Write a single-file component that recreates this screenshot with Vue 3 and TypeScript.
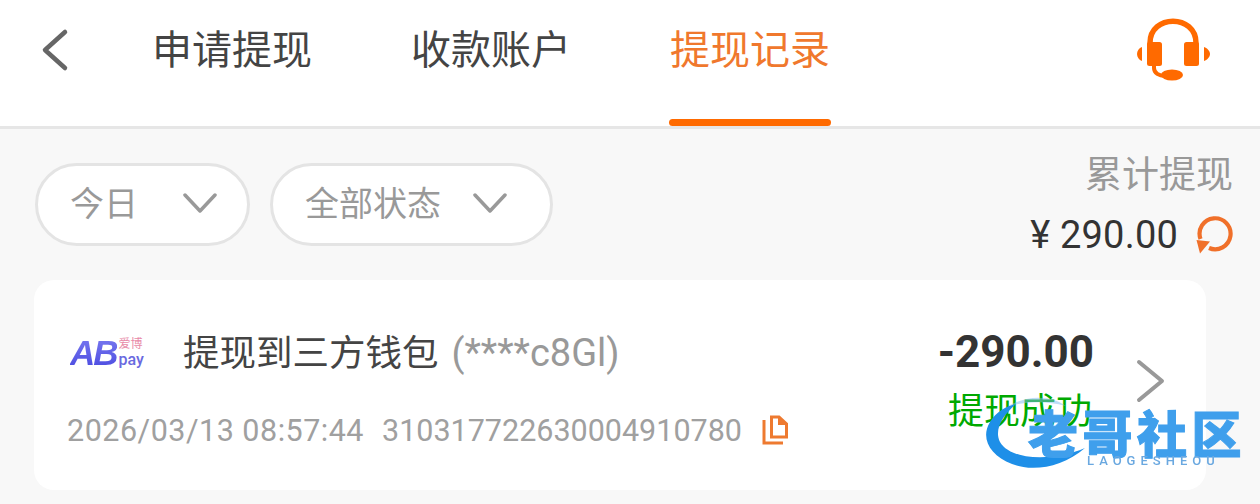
<script setup lang="ts">
const tabs: string[] = ['申请提现', '收款账户', '提现记录']
const activeTab = 2
const filters = [
  { label: '今日', cls: 'pill-range' },
  { label: '全部状态', cls: 'pill-status' },
]
</script>

<template>
  <div class="page">
    <header class="header">
      <svg class="back" viewBox="0 0 30 44" width="30" height="44">
        <path d="M25 4 L5 22 L25 40" fill="none" stroke="#666" stroke-width="4.5" stroke-linecap="round" stroke-linejoin="round" />
      </svg>
      <nav class="tabs">
        <div v-for="(tab, i) in tabs" :key="tab" class="tab" :class="{ active: i === activeTab }">{{ tab }}</div>
      </nav>
      <svg class="support" viewBox="0 0 76 64" width="76" height="64">
        <path d="M15 30 V25 C15 -4 61 -4 61 25 V30" fill="none" stroke="#ff6a00" stroke-width="5.5" />
        <rect x="12" y="24" width="15" height="24" rx="2.5" fill="#ff6a00" />
        <rect x="49" y="24" width="15" height="24" rx="2.5" fill="#ff6a00" />
        <path d="M7 29 C4 30 2 33 2 36 C2 39 4 42 7 43 Z" fill="#ff6a00" />
        <path d="M69 29 C72 30 75 33 75 36 C75 39 72 42 69 43 Z" fill="#ff6a00" />
        <path d="M19 48 V50 C19 55 24 58 30 58" fill="none" stroke="#ff6a00" stroke-width="4" />
        <ellipse cx="37" cy="57" rx="11" ry="5.5" fill="#ff6a00" />
      </svg>
    </header>

    <section class="toolbar">
      <div class="filters">
        <div v-for="f in filters" :key="f.label" class="pill" :class="f.cls">
          <span>{{ f.label }}</span>
          <svg viewBox="0 0 34 20" width="34" height="20">
            <path d="M2 2 L17 18 L32 2" fill="none" stroke="#999" stroke-width="3.5" stroke-linecap="round" stroke-linejoin="round" />
          </svg>
        </div>
      </div>
      <div class="total">
        <div class="total-label">累计提现</div>
        <div class="total-value">
          <span>¥ 290.00</span>
          <svg viewBox="0 0 38 38" width="38" height="38">
            <path d="M4.5 23 A15.5 15.5 0 1 1 13 32" fill="none" stroke="#f0702a" stroke-width="4.2" />
            <path d="M0.5 24 L14 25.5 L4 37.5 Z" fill="#f0702a" />
          </svg>
        </div>
      </div>
    </section>

    <article class="card">
      <div class="card-main">
        <div class="card-head">
          <div class="logo">
            <span class="logo-ab">AB</span>
            <div class="logo-side">
              <span class="logo-cn">爱博</span>
              <span class="logo-pay">pay</span>
            </div>
          </div>
          <div class="title">提现到三方钱包<span class="account">(****c8Gl)</span></div>
        </div>
        <div class="meta">
          <span class="meta-date">2026/03/13 08:57:44</span>
          <span>310317722630004910780</span>
          <svg viewBox="0 0 26 30" width="26" height="30">
            <path d="M2 5 V28 H21" fill="none" stroke="#ee7a30" stroke-width="3" />
            <path d="M9.5 2 H17 L24.5 9 V22 H9.5 Z" fill="none" stroke="#ee7a30" stroke-width="3" />
            <path d="M16 1 L26 10 H16 Z" fill="#ee7a30" />
          </svg>
        </div>
      </div>
      <div class="result">
        <div class="amount">-290.00</div>
        <div class="status">提现成功</div>
      </div>
      <svg class="next" viewBox="0 0 30 44" width="30" height="44">
        <path d="M3 3 L26 22 L3 41" fill="none" stroke="#999" stroke-width="4" stroke-linecap="round" stroke-linejoin="round" />
      </svg>
    </article>

    <div class="watermark">
      <svg class="swoosh" viewBox="0 0 110 80" width="110" height="80">
        <path d="M26 10 C48 -2 70 0 84 10 C62 4 44 6 26 10 Z" fill="#7dbcf0" opacity="0.5" />
        <path d="M103 52 C80 72 50 76 30 68 C8 60 -2 42 8 26 C14 16 24 10 34 8 C20 20 12 34 18 46 C28 64 70 66 103 52 Z" fill="#1e8fe8" />
      </svg>
      <div class="mark-name">老哥社区</div>
      <div class="mark-sub">LAOGESHEOU</div>
    </div>
  </div>
</template>

<style>
html,
body {
  margin: 0;
  background: #f8f8f8;
}
</style>

<style scoped>
.page {
  position: relative;
  width: 1260px;
  height: 504px;
  overflow: hidden;
  background: #f8f8f8;
  font-family: Roboto, "Noto Sans CJK SC", sans-serif;
  color: #333;
}

.header {
  display: flex;
  align-items: center;
  height: 100px;
  padding: 0 49px 26px 40px;
  background: #fff;
  border-bottom: 3px solid #e6e6e6;
}

.back {
  margin-right: 82px;
}

.tabs {
  display: flex;
  gap: 99px;
  flex: 1;
  align-self: stretch;
}

.tab {
  position: relative;
  display: flex;
  align-items: center;
  width: 160px;
  height: 94px;
  padding-bottom: 6px;
  font-size: 40px;
  white-space: nowrap;
  color: #444;
}

.tab.active {
  color: #f0782d;
}

.tab.active::after {
  content: "";
  position: absolute;
  left: -1px;
  right: -1px;
  bottom: -26px;
  height: 7px;
  border-radius: 4px;
  background: #ff6a00;
}

.toolbar {
  display: flex;
  justify-content: space-between;
  height: 151px;
  padding: 25px 27px 0 35px;
  box-sizing: border-box;
}

.filters {
  display: flex;
  gap: 20px;
  align-items: flex-start;
  padding-top: 9px;
}

.pill {
  display: flex;
  align-items: center;
  height: 83px;
  padding: 0 30px 3px 32px;
  box-sizing: border-box;
  background: #fff;
  border: 3px solid #e4e4e4;
  border-radius: 42px;
  font-size: 34px;
  color: #999;
}

.pill span {
  margin-bottom: 4px;
}

.pill-range {
  gap: 45px;
}

.pill-status {
  gap: 32px;
  padding-right: 43px;
}

.total {
  display: flex;
  flex-direction: column;
  align-items: flex-end;
}

.total-label {
  font-size: 37px;
  line-height: 44px;
  color: #999;
}

.total-value {
  display: flex;
  align-items: center;
  gap: 18px;
  margin: 15px -1px 0 0;
  font-size: 38px;
  line-height: 44px;
  letter-spacing: 0.2px;
  color: #333;
}

.card {
  display: flex;
  height: 210px;
  width: 1172px;
  margin-left: 34px;
  padding: 0 40px 0 36px;
  box-sizing: border-box;
  background: #fff;
  border-radius: 20px;
}

.card-main {
  flex: 1;
  padding-top: 51px;
}

.card-head {
  display: flex;
  align-items: center;
  height: 44px;
}

.logo {
  display: flex;
  align-items: center;
  width: 73px;
  margin-right: 40px;
  height: 34px;
}

.logo-ab {
  font-family: "Liberation Sans", sans-serif;
  font-size: 35px;
  line-height: 34px;
  font-weight: 700;
  font-style: italic;
  letter-spacing: -2px;
  background: linear-gradient(180deg, #7a7af0, #4a4ae0);
  -webkit-background-clip: text;
  background-clip: text;
  color: transparent;
}

.logo-side {
  display: flex;
  flex-direction: column;
  margin-left: 2px;
}

.logo-cn {
  font-size: 12px;
  line-height: 14px;
  color: #e88aa8;
}

.logo-pay {
  font-size: 16px;
  line-height: 18px;
  font-weight: 500;
  color: #6a6ae0;
}

.title {
  font-size: 36.5px;
  line-height: 44px;
  color: #444;
  white-space: nowrap;
}

.account {
  margin-left: 13px;
  font-size: 38px;
  color: #999;
}

.meta {
  display: flex;
  align-items: center;
  gap: 18px;
  margin: 36px 0 0 -3px;
  font-size: 30.5px;
  line-height: 40px;
  color: #a0a0a0;
  white-space: nowrap;
}

.meta-date {
  letter-spacing: 0.5px;
}

.meta svg {
  margin: 0 0 3px 2px;
}

.result {
  display: flex;
  flex-direction: column;
  align-items: flex-end;
  padding-top: 48px;
  margin-right: 42px;
}

.amount {
  font-size: 44px;
  line-height: 48px;
  font-weight: 700;
  color: #333;
}

.status {
  font-size: 36px;
  line-height: 44px;
  margin: 14px 2px 0 0;
  color: #00a900;
}

.next {
  flex: none;
  margin-top: 79px;
}

.watermark {
  position: absolute;
  left: 982px;
  top: 392px;
  width: 270px;
  height: 112px;
  filter: blur(0.6px);
}

.swoosh {
  position: absolute;
  left: 0;
  top: 4px;
}

.mark-name {
  position: absolute;
  left: 46px;
  top: 16px;
  font-size: 50px;
  line-height: 56px;
  font-weight: 900;
  letter-spacing: 4.5px;
  white-space: nowrap;
  color: #3f9fec;
  -webkit-text-stroke: 1px #3f9fec;
}

.mark-sub {
  position: absolute;
  left: 105px;
  top: 61px;
  font-size: 13px;
  line-height: 16px;
  letter-spacing: 5px;
  font-weight: 500;
  color: #6aa8e0;
}
</style>
